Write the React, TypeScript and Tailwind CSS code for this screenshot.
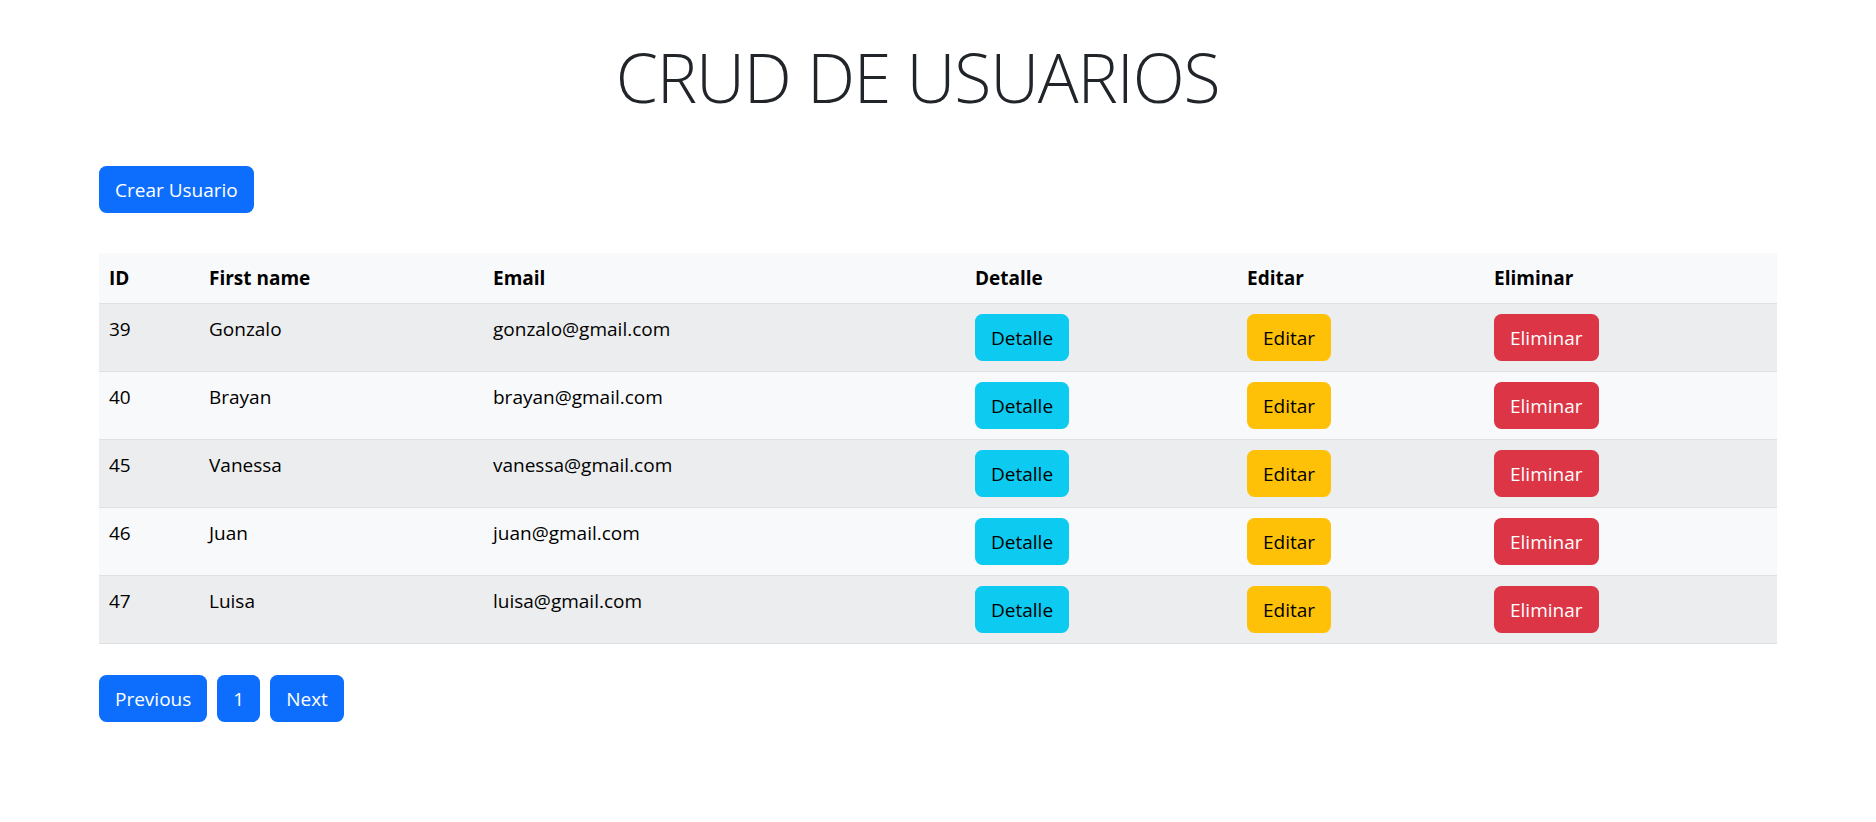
const usuarios = [
  { id: 39, nombre: "Gonzalo", email: "gonzalo@gmail.com" },
  { id: 40, nombre: "Brayan", email: "brayan@gmail.com" },
  { id: 45, nombre: "Vanessa", email: "vanessa@gmail.com" },
  { id: 46, nombre: "Juan", email: "juan@gmail.com" },
  { id: 47, nombre: "Luisa", email: "luisa@gmail.com" },
];

const btn = "inline-block rounded-[7.5px] border border-transparent px-[15px] py-[7.5px] text-[19px] leading-[30px]";

export default function App() {
  return (
    <div className="min-h-screen bg-white text-[#212529] font-['Open_Sans','Noto_Sans',sans-serif]">
      <div className="mx-[99px]">
        {/* Titulo */}
        <h1 className="pt-[35px] pr-[41px] text-center text-[68px] leading-[84px] font-light tracking-[-1.2px]">CRUD DE USUARIOS</h1>

        <div className="mt-[47px]">
          <button className={`${btn} bg-[#0d6efd] text-white`}>Crear Usuario</button>
        </div>

        {/* Tabla */}
        <table className="mt-[40px] w-full border-collapse text-left text-[19px] leading-[30px] text-black">
          <thead>
            <tr className="bg-[#f8f9fa] border-b border-[#dfe0e1]">
              <th className="w-[100px] p-[10px] font-bold">ID</th>
              <th className="w-[284px] p-[10px] font-bold">First name</th>
              <th className="w-[482px] p-[10px] font-bold">Email</th>
              <th className="w-[272px] p-[10px] font-bold">Detalle</th>
              <th className="w-[247px] p-[10px] font-bold">Editar</th>
              <th className="p-[10px] font-bold">Eliminar</th>
            </tr>
          </thead>
          <tbody>
            {usuarios.map((u, i) => (
              <tr key={u.id} className={`border-b border-[#dfe0e1] ${i % 2 === 0 ? "bg-[#ecedee]" : "bg-[#f8f9fa]"}`}>
                <td className="p-[10px] align-top">{u.id}</td>
                <td className="p-[10px] align-top">{u.nombre}</td>
                <td className="p-[10px] align-top">{u.email}</td>
                <td className="p-[10px] align-top">
                  <button className={`${btn} bg-[#0dcaf0] text-black`}>Detalle</button>
                </td>
                <td className="p-[10px] align-top">
                  <button className={`${btn} bg-[#ffc107] text-black`}>Editar</button>
                </td>
                <td className="p-[10px] align-top">
                  <button className={`${btn} bg-[#dc3545] text-white`}>Eliminar</button>
                </td>
              </tr>
            ))}
          </tbody>
        </table>

        {/* Paginacion */}
        <div className="mt-[31px] flex gap-[10px]">
          <button className={`${btn} bg-[#0d6efd] text-white`}>Previous</button>
          <button className={`${btn} bg-[#0d6efd] text-white`}>1</button>
          <button className={`${btn} bg-[#0d6efd] text-white`}>Next</button>
        </div>
      </div>
    </div>
  );
}
